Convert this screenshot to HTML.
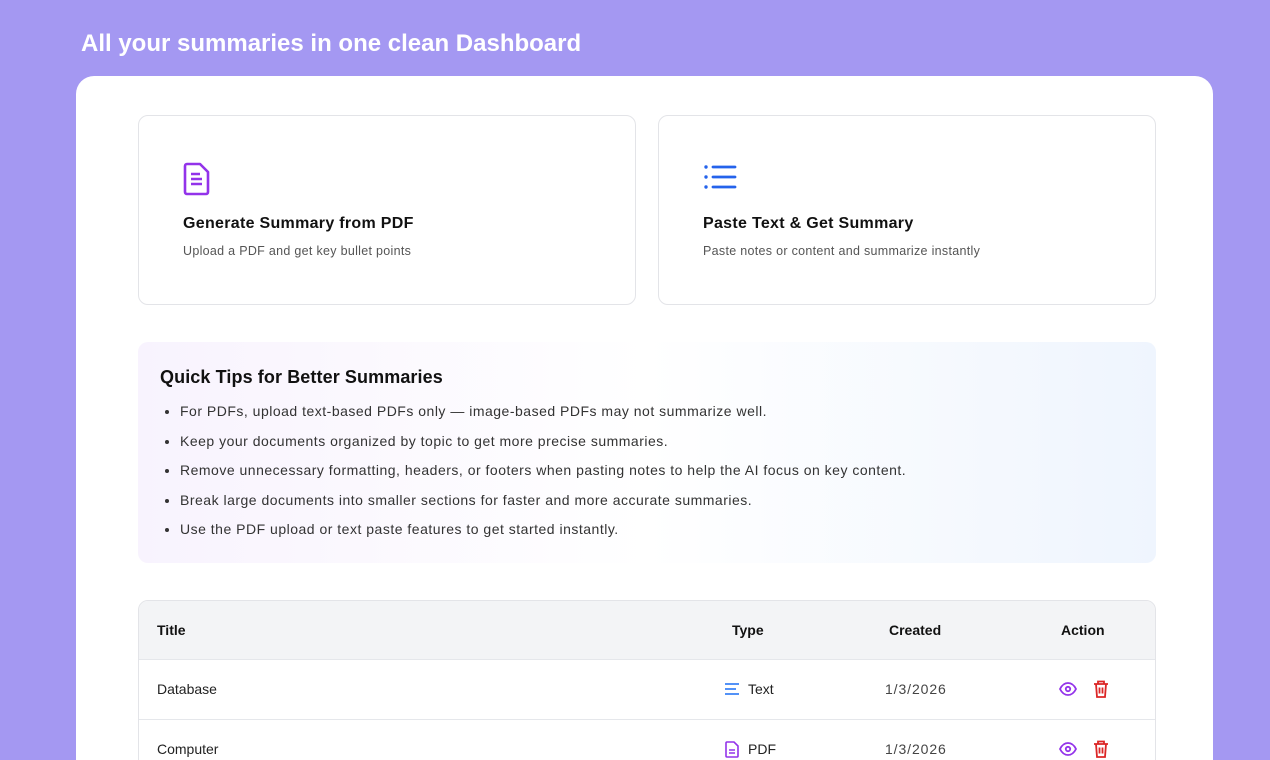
<!DOCTYPE html>
<html style="overflow:hidden;height:760px"><head><style>
*{box-sizing:border-box;margin:0;padding:0}
body{width:1270px;height:760px;overflow:hidden;background:#a498f2;font-family:"Liberation Sans",sans-serif;position:relative}
h1{position:absolute;left:81px;top:30px;color:#fff;font-size:24px;font-weight:600;letter-spacing:0px}
.main{position:absolute;left:76px;top:76px;width:1137px;height:684px;background:#fff;border-radius:18px 18px 0 0;overflow:hidden}
.card{position:absolute;top:39px;width:498px;height:190px;border:1px solid #e3e4e8;border-radius:10px}
.card svg{position:absolute;left:44px;top:46px}
.card .t{position:absolute;left:44px;top:99px;font-size:16px;font-weight:700;color:#111;letter-spacing:0.3px}
.card .s{position:absolute;left:44px;top:128px;font-size:12.5px;color:#555;letter-spacing:0.3px}
.tips{position:absolute;left:62px;top:266px;width:1018px;height:221px;border-radius:10px;background:linear-gradient(90deg,#f8f3fe,#ffffff 50%,#eff5fe)}
.tips h2{position:absolute;left:22px;top:25px;font-size:18px;font-weight:700;color:#111;letter-spacing:0.1px}
.tips ul{position:absolute;left:42px;top:59px;font-size:14px;color:#333;list-style:disc;letter-spacing:0.5px;white-space:nowrap}
.tips li{height:29.5px;line-height:20px}
.tbl{position:absolute;left:62px;top:524px;width:1018px;height:220px;border:1px solid #e3e4e8;border-radius:10px;overflow:hidden}
.hd{height:58px;background:#f3f4f6;position:relative;font-weight:700;font-size:14px;color:#111}
.row{height:60px;border-top:1px solid #e5e7eb;position:relative;font-size:14px;color:#222}
.c{position:absolute;top:0;line-height:58px}
.d{font-size:14px;letter-spacing:0.9px}
</style></head><body>
<h1>All your summaries in one clean Dashboard</h1>
<div class="main">
<div class="card" style="left:62px">
<svg width="28" height="34" viewBox="0 0 28 34"><path d="M4 2h13l8 8v20a2 2 0 0 1-2 2H4a2 2 0 0 1-2-2V4a2 2 0 0 1 2-2z" fill="none" stroke="#9333ea" stroke-width="2.6" stroke-linejoin="round"/><path d="M8 12h9M8 17h11M8 22h11" stroke="#9333ea" stroke-width="2.6"/></svg>
<div class="t">Generate Summary from PDF</div><div class="s">Upload a PDF and get key bullet points</div></div>
<div class="card" style="left:582px">
<svg width="34" height="30" viewBox="0 0 34 30"><g fill="#2563eb"><circle cx="3" cy="5" r="1.7"/><circle cx="3" cy="15" r="1.7"/><circle cx="3" cy="25" r="1.7"/></g><path d="M10 5h22M10 15h22M10 25h22" stroke="#2563eb" stroke-width="2.8" stroke-linecap="round"/></svg>
<div class="t">Paste Text &amp; Get Summary</div><div class="s">Paste notes or content and summarize instantly</div></div>
<div class="tips"><h2>Quick Tips for Better Summaries</h2><ul>
<li>For PDFs, upload text-based PDFs only — image-based PDFs may not summarize well.</li>
<li>Keep your documents organized by topic to get more precise summaries.</li>
<li>Remove unnecessary formatting, headers, or footers when pasting notes to help the AI focus on key content.</li>
<li>Break large documents into smaller sections for faster and more accurate summaries.</li>
<li>Use the PDF upload or text paste features to get started instantly.</li></ul></div>
<div class="tbl">
<div class="hd"><span class="c" style="left:18px">Title</span><span class="c" style="left:593px">Type</span><span class="c" style="left:750px">Created</span><span class="c" style="left:922px">Action</span></div>
<div class="row"><span class="c" style="left:18px">Database</span>
<svg style="position:absolute;left:585px;top:22px" width="16" height="14"><path d="M1 2h14M1 7h11M1 12h14" stroke="#3b82f6" stroke-width="1.8"/></svg>
<span class="c" style="left:609px">Text</span><span class="c d" style="left:746px;color:#444">1/3/2026</span>
<svg style="position:absolute;left:920px;top:22px" width="18" height="14" viewBox="0 0 18 14"><path d="M1 7c2-4 5-6 8-6s6 2 8 6c-2 4-5 6-8 6s-6-2-8-6z" fill="none" stroke="#9333ea" stroke-width="1.8"/><circle cx="9" cy="7" r="2.2" fill="none" stroke="#9333ea" stroke-width="1.8"/></svg>
<svg style="position:absolute;left:954px;top:20px" width="16" height="18" viewBox="0 0 16 18"><path d="M1 4h14M5 4V1.5h6V4M3 4l1 13h8l1-13M6.5 7.5v6M9.5 7.5v6" fill="none" stroke="#dc2626" stroke-width="1.8"/></svg></div>
<div class="row"><span class="c" style="left:18px">Computer</span>
<svg style="position:absolute;left:586px;top:21px" width="14" height="17" viewBox="0 0 14 17"><path d="M2 1h7l4 4v10a1 1 0 0 1-1 1H2a1 1 0 0 1-1-1V2a1 1 0 0 1 1-1z" fill="none" stroke="#9333ea" stroke-width="1.6"/><path d="M4 9h6M4 12h6" stroke="#9333ea" stroke-width="1.6"/></svg>
<span class="c" style="left:609px">PDF</span><span class="c d" style="left:746px;color:#444">1/3/2026</span>
<svg style="position:absolute;left:920px;top:22px" width="18" height="14" viewBox="0 0 18 14"><path d="M1 7c2-4 5-6 8-6s6 2 8 6c-2 4-5 6-8 6s-6-2-8-6z" fill="none" stroke="#9333ea" stroke-width="1.8"/><circle cx="9" cy="7" r="2.2" fill="none" stroke="#9333ea" stroke-width="1.8"/></svg>
<svg style="position:absolute;left:954px;top:20px" width="16" height="18" viewBox="0 0 16 18"><path d="M1 4h14M5 4V1.5h6V4M3 4l1 13h8l1-13M6.5 7.5v6M9.5 7.5v6" fill="none" stroke="#dc2626" stroke-width="1.8"/></svg></div>
</div></div>
</body></html>
